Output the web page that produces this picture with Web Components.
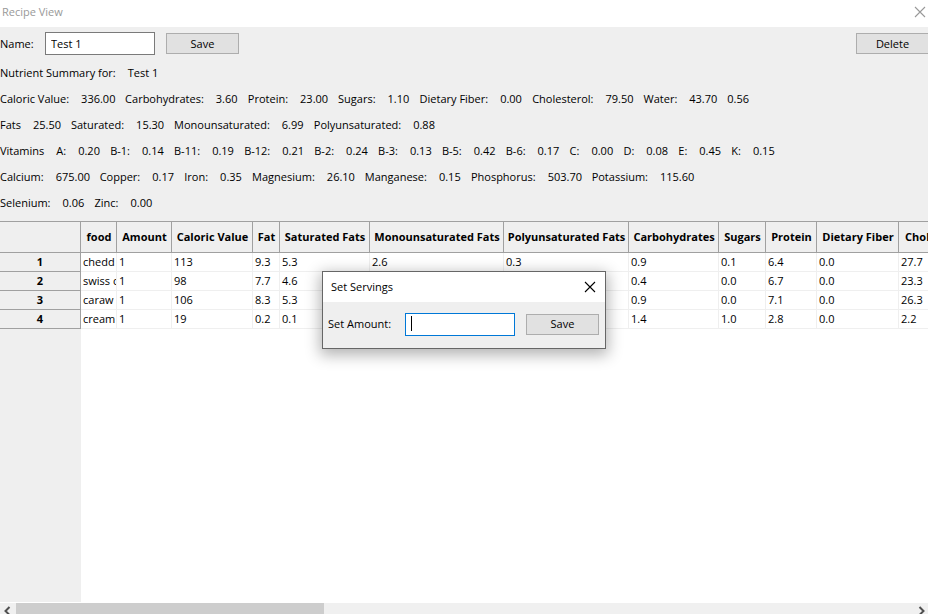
<!DOCTYPE html>
<html lang="en">
<head>
<meta charset="utf-8">
<title>Recipe View</title>
<style>
html, body { margin: 0; height: 100%; }
body { font: 11px/16px "Open Sans", "Noto Sans", sans-serif; color: #000; background: #fff; overflow: hidden; }
</style>
</head>
<body>
<recipe-window>
  <title-bar slot="title" class="inactive">Recipe View</title-bar>
  <recipe-toolbar slot="toolbar"></recipe-toolbar>
  <nutrient-summary slot="summary" recipe="Test 1"></nutrient-summary>
  <food-grid slot="grid"></food-grid>
  <scroll-strip slot="scroll"></scroll-strip>
</recipe-window>
<servings-dialog></servings-dialog>

<script>
const define = (name, html, setup) => {
  const tpl = document.createElement('template');
  tpl.innerHTML = '<style>:host,*{box-sizing:border-box}</style>' + html;
  customElements.define(name, class extends HTMLElement {
    constructor() {
      super();
      this.attachShadow({ mode: 'open' }).append(tpl.content.cloneNode(true));
    }
    connectedCallback() { if (setup) setup(this, this.shadowRoot); }
  });
};

const controls = `
  label { white-space: nowrap; }
  input { width: 110px; height: 23px; padding: 0 5px 1px; border: 1px solid #7a7a7a; background: #fff; font: inherit; color: inherit; outline: none; border-radius: 0; }
`;

define('push-button', `
  <style>
    :host { display: block; flex: none; width: 73px; height: 21px; }
    button { display: block; width: 100%; height: 100%; padding: 0; border: 1px solid #adadad; border-radius: 0; background: #e1e1e1; font: inherit; color: inherit; }
  </style>
  <button type="button"><slot></slot></button>`);

define('title-bar', `
  <style>
    :host { display: flex; align-items: center; justify-content: space-between; flex: none; height: 27px; padding: 0 2px 3px; background: #fff; color: #999; }
    :host(.active) { height: 30px; padding: 0 9px 0 8px; color: #000; }
    button { display: flex; padding: 0; border: 0; background: none; color: inherit; }
  </style>
  <span><slot></slot></span>
  <button type="button" aria-label="Close"><svg width="12" height="12" viewBox="0 0 12 12" fill="none" stroke="currentColor" stroke-width="1.1"><path d="M1 1l10 10M11 1L1 11"/></svg></button>`);

define('recipe-window', `
  <style>
    :host { display: flex; flex-direction: column; height: 100vh; overflow: hidden; }
    .head { flex: none; background: #efefef; }
    .grid { flex: 1; min-height: 0; overflow: hidden; display: flex; }
    ::slotted(food-grid) { flex: 1; min-width: 0; }
  </style>
  <slot name="title"></slot>
  <div class="head"><slot name="toolbar"></slot><slot name="summary"></slot></div>
  <div class="grid"><slot name="grid"></slot></div>
  <slot name="scroll"></slot>`);

define('recipe-toolbar', `
  <style>
    ${controls}
    :host { display: flex; align-items: center; gap: 11px; height: 33px; overflow: hidden; }
    label { width: 34px; }
    .end { margin-left: auto; margin-right: -1px; }
  </style>
  <label for="name">Name:</label>
  <input id="name" type="text" value="Test 1">
  <push-button>Save</push-button>
  <push-button class="end">Delete</push-button>`);

define('nutrient-summary', `
  <style>
    :host { display: block; padding-bottom: 5px; }
    .row { display: flex; height: 26px; align-items: center; white-space: pre; }
    .label { margin-right: 12px; }
    .value { flex: none; margin-right: 11px; width: 21px; }
    .value.tens { width: 27px; }
    .value.hundreds { width: 33px; }
  </style>
  <div class="row"><span class="label">Nutrient Summary for:</span><span id="recipe"></span></div>
  <div id="rows"></div>`, (host, root) => {
  root.getElementById('recipe').textContent = host.getAttribute('recipe');
  const rows = [
    'Caloric Value:|336.00|Carbohydrates:|3.60|Protein:|23.00|Sugars:|1.10|Dietary Fiber:|0.00|Cholesterol:|79.50|Water:|43.70|0.56',
    'Fats|25.50|Saturated:|15.30|Monounsaturated:|6.99|Polyunsaturated:|0.88',
    'Vitamins|A:|0.20|B-1:|0.14|B-11:|0.19|B-12:|0.21|B-2:|0.24|B-3:|0.13|B-5:|0.42|B-6:|0.17|C:|0.00|D:|0.08|E:|0.45|K:|0.15',
    'Calcium:|675.00|Copper:|0.17|Iron:|0.35|Magnesium:|26.10|Manganese:|0.15|Phosphorus:|503.70|Potassium:|115.60',
    'Selenium:|0.06|Zinc:|0.00'
  ];
  for (const line of rows) {
    const row = document.createElement('div');
    row.className = 'row';
    for (const text of line.split('|')) {
      const item = document.createElement('span');
      item.className = /^\d/.test(text) ? 'value ' + ({ 5: 'tens', 6: 'hundreds' }[text.length] || '') : 'label';
      item.textContent = text;
      row.append(item);
    }
    root.getElementById('rows').append(row);
  }
});

define('food-grid', `
  <style>
    :host { display: block; overflow: hidden; background: linear-gradient(to right, #efefef 81px, #fff 81px); border-bottom: 1px solid #fff; }
    table { table-layout: fixed; width: 0; border-collapse: separate; border-spacing: 0; border-top: 1px solid #a0a0a0; }
    th, td { padding: 0; white-space: nowrap; overflow: hidden; }
    th { background: #efefef; border-right: 1px solid #a0a0a0; border-bottom: 1px solid #a0a0a0; font-weight: 700; text-align: center; }
    thead th { height: 31px; padding-left: 1px; }
    td { height: 19px; padding: 0 0 0 2px; border-right: 1px solid #efefef; border-bottom: 1px solid #efefef; background: #fff; line-height: 18px; }
    td.corner { background: #efefef; border-color: #a0a0a0; }
    tbody th { line-height: 18px; }
  </style>
  <table><colgroup></colgroup><thead><tr><td class="corner"></td></tr></thead><tbody></tbody></table>`, (host, root) => {
  const columns = [['food', 36], ['Amount', 55], ['Caloric Value', 81], ['Fat', 27], ['Saturated Fats', 90], ['Monounsaturated Fats', 134], ['Polyunsaturated Fats', 125], ['Carbohydrates', 90], ['Sugars', 47], ['Protein', 51], ['Dietary Fiber', 82], ['Cholesterol', 75]];
  const foods = [
    ['chedd', '1', '113', '9.3', '5.3', '2.6', '0.3', '0.9', '0.1', '6.4', '0.0', '27.7'],
    ['swiss c', '1', '98', '7.7', '4.6', '', '', '0.4', '0.0', '6.7', '0.0', '23.3'],
    ['caraw', '1', '106', '8.3', '5.3', '', '', '0.9', '0.0', '7.1', '0.0', '26.3'],
    ['cream', '1', '19', '0.2', '0.1', '', '', '1.4', '1.0', '2.8', '0.0', '2.2']
  ];
  const cell = (tag, text, scope) => {
    const c = document.createElement(tag);
    c.textContent = text;
    if (scope) c.scope = scope;
    return c;
  };
  for (const width of [81, ...columns.map(c => c[1])]) {
    const col = document.createElement('col');
    col.style.width = width + 'px';
    root.querySelector('colgroup').append(col);
  }
  root.querySelector('thead tr').append(...columns.map(c => cell('th', c[0], 'col')));
  foods.forEach((food, i) => {
    const tr = document.createElement('tr');
    tr.append(cell('th', i + 1, 'row'), ...food.map(v => cell('td', v)));
    root.querySelector('tbody').append(tr);
  });
});

define('scroll-strip', `
  <style>
    :host { display: flex; flex: none; height: 11px; overflow: hidden; background: #f0f0f0; }
    button { flex: none; width: 16px; height: 17px; padding: 0; border: 0; background: none; display: flex; }
    .track { flex: 1; height: 17px; }
    .thumb { width: 34.4%; height: 100%; background: #cdcdcd; }
    svg { fill: none; stroke: #505050; stroke-width: 2; }
  </style>
  <button type="button" aria-label="Scroll left"><svg width="16" height="17" viewBox="0 0 16 17"><path d="M9.5 4L5.5 8l4 4"/></svg></button>
  <div class="track"><div class="thumb"></div></div>
  <button type="button" aria-label="Scroll right"><svg width="16" height="17" viewBox="0 0 16 17"><path d="M7.5 4l4 4l-4 4"/></svg></button>`);

define('servings-dialog', `
  <style>
    ${controls}
    :host { position: absolute; top: 271px; left: calc(50% - 142px); width: 284px; border: 1px solid #666; background: #efefef; box-shadow: 0 4px 14px 2px rgba(0,0,0,.3); }
    form { display: flex; align-items: center; height: 46px; padding: 0 6px 2px 5px; margin: 0; }
    label { flex: 1; }
    .field { position: relative; display: flex; margin-right: 11px; }
    .field input { border-color: #0078d7; }
    .caret { position: absolute; left: 6px; top: 3px; width: 1px; height: 15px; background: #000; }
  </style>
  <title-bar class="active">Set Servings</title-bar>
  <form>
    <label for="amount">Set Amount:</label>
    <span class="field"><input id="amount" type="text"><span class="caret"></span></span>
    <push-button>Save</push-button>
  </form>`);
</script>
</body>
</html>
